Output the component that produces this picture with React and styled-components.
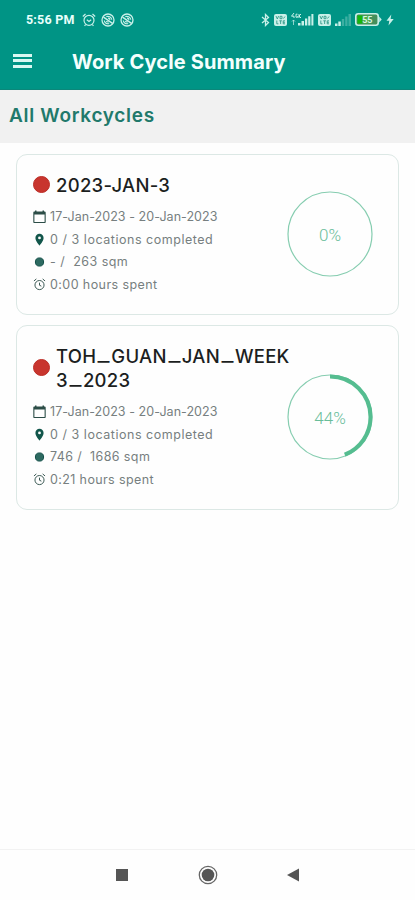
import React from 'react';
import styled, {createGlobalStyle} from 'styled-components';

const GlobalStyle = createGlobalStyle`
  * {
    box-sizing: border-box;
  }
  body {
    margin: 0;
    background: #fefefe;
    font-family: Inter, 'Liberation Sans', sans-serif;
  }
`;

const Screen = styled.div`
  display: flex;
  flex-direction: column;
  width: 415px;
  height: 900px;
  overflow: hidden;
`;

const Header = styled.header`
  height: 90px;
  background: #009485;
  border-bottom: 1px solid #0b877a;
  color: #f4fffd;
`;

const StatusBar = styled.div`
  display: flex;
  align-items: center;
  justify-content: space-between;
  height: 39px;
  padding: 0 21px 0 26px;
`;

const StatusGroup = styled.div`
  display: flex;
  align-items: center;
  gap: ${props => props.$gap}px;
  height: 16px;
  color: #c9f0e9;
  svg {
    display: block;
  }
`;

const Clock = styled.span`
  font: 700 12.5px/16px Roboto, sans-serif;
  letter-spacing: 0.2px;
  color: #e8fffb;
  width: 51px;
  white-space: nowrap;
`;

const TitleBar = styled.div`
  display: flex;
  align-items: center;
  height: 45px;
  padding-left: 13px;
`;

const MenuButton = styled.button`
  display: flex;
  flex-direction: column;
  justify-content: space-between;
  width: 19px;
  height: 14px;
  margin: 0 40px 2px 0;
  padding: 0;
  border: 0;
  background: none;
`;

const MenuLine = styled.span`
  height: 3px;
  background: #d9f8f2;
`;

const Title = styled.h1`
  margin: 0;
  font-size: 20px;
  line-height: 26px;
  font-weight: 700;
  letter-spacing: 0.13px;
  white-space: nowrap;
`;

const SectionBar = styled.div`
  height: 53px;
  padding: 13px 9px 12px;
  background: #f1f1f1;
`;

const SectionTitle = styled.h2`
  margin: 0;
  font-size: 19px;
  line-height: 26px;
  font-weight: 600;
  letter-spacing: 0.7px;
  color: #21796b;
`;

const List = styled.main`
  flex: 1;
  display: flex;
  flex-direction: column;
  gap: 10px;
  padding: 11px 16px 0;
`;

const Card = styled.section`
  display: flex;
  justify-content: space-between;
  align-items: center;
  padding: 18px 25px 20px 16px;
  height: ${props => props.$height}px;
  border: 1.5px solid #dce8e5;
  border-radius: 11px;
`;

const CardBody = styled.div`
  flex: 1;
  align-self: flex-start;
  min-width: 0;
`;

const Heading = styled.div`
  display: flex;
  align-items: center;
  margin-bottom: 9px;
`;

const Dot = styled.span`
  flex: none;
  width: 17px;
  height: 17px;
  margin: 0 6px 2px 0;
  border: 1px solid #bd2d26;
  border-radius: 50%;
  background: #c8352e;
`;

const Name = styled.h3`
  margin: 0;
  font-size: 18.5px;
  line-height: 24px;
  font-weight: 500;
  letter-spacing: 0.27px;
  color: #1c1f1e;
  white-space: nowrap;
`;

const Underscore = styled.span`
  display: inline-block;
  width: 15px;
  text-align: center;
  letter-spacing: 0;
  transform: translateY(-2px) scaleX(1.4);
`;

const Row = styled.div`
  display: flex;
  align-items: center;
  height: 22.5px;
  color: #2c4d47;
  svg {
    flex: none;
    display: block;
    margin-right: 4px;
  }
`;

const RowText = styled.span`
  font-size: 12.5px;
  line-height: 20px;
  color: #777f80;
  letter-spacing: ${props => props.$spacing}px;
  white-space: pre;
`;

const NavBar = styled.nav`
  display: flex;
  justify-content: center;
  align-items: center;
  gap: 67.5px;
  height: 51px;
  border-top: 1px solid #f2f2f2;
  svg {
    display: block;
  }
`;

function AlarmIcon() {
  return (
    <svg width="13" height="13" viewBox="0 0 14 14" fill="none" stroke="currentColor" strokeWidth="1">
      <circle cx="7" cy="7.6" r="4.9" />
      <path d="M1 3.2 3.6 1M13 3.2 10.4 1M7 5v2.8l2 1" />
    </svg>
  );
}

function StatusAlarmIcon() {
  return (
    <svg width="14" height="14" viewBox="0 0 14 14" fill="none" stroke="currentColor" strokeWidth="1.2">
      <circle cx="7" cy="7.3" r="5" />
      <path d="M.8 3.5 3.5 1M13.2 3.5 10.5 1M4.8 6.8 7 8.4l2.2-1.6M3.6 11.5l-1 1.5M10.4 11.5l1 1.5" />
    </svg>
  );
}

function BlockedIcon() {
  return (
    <svg width="14" height="14" viewBox="0 0 14 14" fill="none" stroke="currentColor">
      <circle cx="7" cy="7" r="6" strokeWidth="1.3" />
      <path d="m2.5 4.2 9 6.2" strokeWidth="1.5" />
      <path d="M3.3 7.5c.2 2.400 2.600 3.800 4.900 3M5.300 3.600C7.500 2.700 10.400 4 10.800 6.700M5.200 8.200c.8.8 1.700.9 2.500.6M7 5.200c1.200 0 1.900.7 2 1.700" strokeWidth="1.2" />
    </svg>
  );
}

function BluetoothIcon() {
  return (
    <svg width="9" height="14" viewBox="0 0 9 14" fill="none" stroke="currentColor" strokeWidth="1.3">
      <path d="m1 4 6.5 5.5L4.5 12.5v-11l3 3L1 10" />
    </svg>
  );
}

function VolteIcon() {
  return (
    <svg width="13" height="12" viewBox="0 0 13 12">
      <rect width="13" height="12" rx="2" fill="currentColor" />
      <path
        d="m2 2 1.3 3L4.6 2M6 2.3h2v2.4H6zM9.5 4.5l1.5-2M2.8 6.5v3.3h1.6M5.3 6.8h2.6M6.6 6.8v3.2M11 6.8H9.2v3H11M9.2 8.3H11"
        fill="none"
        stroke="#23917f"
        strokeWidth=".8"
      />
    </svg>
  );
}

function MobileSignal() {
  return (
    <svg width="23" height="13" viewBox="0 0 23 13" fill="currentColor">
      <path d="M3 0 .5 3.2H3V5M6.5 1.2H5v3h1.8V3M8 1v4M8 3l2-2M8 3l2 2" fill="none" stroke="currentColor" />
      <path d="M2.5 7v5M1 8.5 2.5 7 4 8.5" fill="none" stroke="currentColor" opacity=".7" />
      <path d="M7 10h2.5v2.5H7zM10.5 8H13v4.5h-2.5zM14 5.5h2.3v7H14zM17.2 3.3h2.2v9.2h-2.2zM20.4 1h2v11.5h-2z" />
    </svg>
  );
}

function WeakSignal() {
  return (
    <svg width="16" height="12" viewBox="0 0 16 12" fill="currentColor">
      <path d="M0 9.5h2.5V12H0zM3.3 7.5h2.5V12H3.3z" />
      <path d="M6.8 5h2.4v7H6.8zM10.2 2.5h2.3V12h-2.3zM13.5 0H16v12h-2.5z" opacity=".3" />
    </svg>
  );
}

function BatteryIcon() {
  return (
    <svg width="27" height="13" viewBox="0 0 27 13">
      <rect x=".8" y=".8" width="22.4" height="11.4" rx="2.4" fill="#458f5c" stroke="#c9f0e9" strokeWidth="1.6" />
      <path d="M2.5 2.5h5v8h-5z" fill="#13b80b" />
      <path d="M7.5 2.5h7v8h-7z" fill="#4fad48" />
      <path d="M24.2 3.5 26.7 6.5l-2.5 3z" fill="#c9f0e9" />
      <text x="12.3" y="10" textAnchor="middle" fontFamily="Roboto" fontSize="9" fontWeight="700" fill="#d7f6e4">
        55
      </text>
    </svg>
  );
}

function BoltIcon() {
  return (
    <svg width="8" height="12" viewBox="0 0 8 12" fill="currentColor">
      <path d="M5.3.5.5 6.8h2.8L2.5 11.5 7.7 5H4.6z" />
    </svg>
  );
}

function CalendarIcon() {
  return (
    <svg width="13" height="14" viewBox="0 0 13 14" fill="currentColor">
      <path d="M2 1.5V.5h1.5v1h6v-1H11v1h.8c.5 0 .9.4.9.9V12c0 .6-.4 1-1 1H1.3c-.6 0-1-.4-1-1V2.4c0-.5.4-.9.9-.9zM1.4 4.6v7.3h10.2V4.6z" />
    </svg>
  );
}

function PinIcon() {
  return (
    <svg width="13" height="14" viewBox="0 0 13 14" fill="#12564b">
      <path
        fillRule="evenodd"
        d="M6.5.8C4.200.8 2.400 2.600 2.400 4.900c0 2.900 4.100 7.600 4.100 7.600s4.100-4.700 4.100-7.600C10.600 2.600 8.800.8 6.500.8zm0 2.700a1.400 1.400 0 1 1 0 2.800 1.400 1.400 0 0 1 0-2.800z"
      />
    </svg>
  );
}

function AreaIcon() {
  return (
    <svg width="13" height="14" viewBox="0 0 13 14">
      <circle cx="6.5" cy="7" r="4.1" fill="#2d6a61" stroke="#124f48" />
    </svg>
  );
}

function Progress({value}) {
  const length = 2 * Math.PI * 40.5;
  return (
    <svg width="86" height="86" viewBox="0 0 86 86">
      <circle cx="43" cy="43" r="42" fill="none" stroke="#86cdb0" strokeWidth="1.2" />
      {value > 0 && (
        <circle
          cx="43"
          cy="43"
          r="40.5"
          fill="none"
          stroke="#55bd90"
          strokeWidth="4"
          strokeDasharray={`${(length * value) / 100} ${length}`}
          transform="rotate(-90 43 43)"
        />
      )}
      <text x="43" y="49.5" textAnchor="middle" fontFamily="Roboto" fontWeight="300" fontSize="17" fill="#69bd9a">
        {value}%
      </text>
    </svg>
  );
}

const cycles = [
  {
    lines: ['2023-JAN-3'],
    height: 161,
    progress: 0,
    rows: [
      ['calendar', '17-Jan-2023 - 20-Jan-2023', 0.05],
      ['pin', '0 / 3 locations completed', 0.53],
      ['area', '- /  263 sqm', 0.47],
      ['alarm', '0:00 hours spent', 0.42],
    ],
  },
  {
    lines: ['TOH_GUAN_JAN_WEEK', '3_2023'],
    height: 185,
    progress: 44,
    rows: [
      ['calendar', '17-Jan-2023 - 20-Jan-2023', 0.05],
      ['pin', '0 / 3 locations completed', 0.53],
      ['area', '746 /  1686 sqm', 0.4],
      ['alarm', '0:21 hours spent', 0.38],
    ],
  },
];

const icons = {
  calendar: CalendarIcon,
  pin: PinIcon,
  area: AreaIcon,
  alarm: AlarmIcon,
};

function CycleCard({cycle}) {
  return (
    <Card $height={cycle.height}>
      <CardBody>
        <Heading>
          <Dot />
          <Name>
            {cycle.lines.map(line => (
              <div key={line}>
                {line.split('').map((char, index) =>
                  char === '_' ? <Underscore key={index}>_</Underscore> : char,
                )}
              </div>
            ))}
          </Name>
        </Heading>
        {cycle.rows.map(([icon, text, spacing]) => {
          const Icon = icons[icon];
          return (
            <Row key={icon}>
              <Icon />
              <RowText $spacing={spacing}>{text}</RowText>
            </Row>
          );
        })}
      </CardBody>
      <Progress value={cycle.progress} />
    </Card>
  );
}

export default function App() {
  return (
    <Screen>
      <GlobalStyle />
      <Header>
        <StatusBar>
          <StatusGroup $gap={5}>
            <Clock>5:56 PM</Clock>
            <StatusAlarmIcon />
            <BlockedIcon />
            <BlockedIcon />
          </StatusGroup>
          <StatusGroup $gap={4}>
            <BluetoothIcon />
            <VolteIcon />
            <MobileSignal />
            <VolteIcon />
            <WeakSignal />
            <BatteryIcon />
            <BoltIcon />
          </StatusGroup>
        </StatusBar>
        <TitleBar>
          <MenuButton aria-label="Menu">
            <MenuLine />
            <MenuLine />
            <MenuLine />
          </MenuButton>
          <Title>Work Cycle Summary</Title>
        </TitleBar>
      </Header>
      <SectionBar>
        <SectionTitle>All Workcycles</SectionTitle>
      </SectionBar>
      <List>
        {cycles.map(cycle => (
          <CycleCard key={cycle.lines[0]} cycle={cycle} />
        ))}
      </List>
      <NavBar>
        <svg width="16" height="20" viewBox="0 0 16 20">
          <path d="M2 4h12v12H2z" fill="#555" />
        </svg>
        <svg width="20" height="20" viewBox="0 0 20 20">
          <circle cx="10" cy="10" r="8.7" fill="none" stroke="#666" strokeWidth="1.3" />
          <circle cx="10" cy="10" r="6.3" fill="#555" />
        </svg>
        <svg width="16" height="20" viewBox="0 0 16 20">
          <path d="M14 3.5v13L2 10z" fill="#555" />
        </svg>
      </NavBar>
    </Screen>
  );
}
